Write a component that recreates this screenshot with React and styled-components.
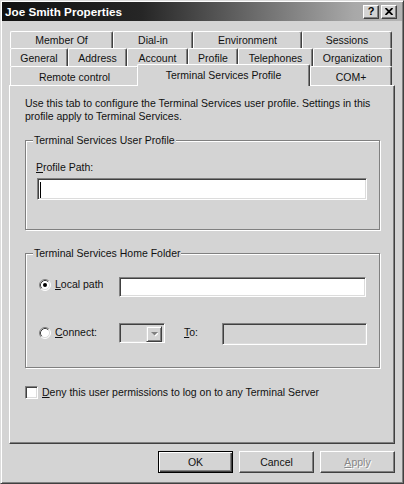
import React from "react";
import styled, { createGlobalStyle, css } from "styled-components";

const GlobalStyle = createGlobalStyle`
  html, body { margin: 0; padding: 0; background: #d4d4d4; }
  #root { width: 404px; height: 484px; }
`;

const FACE = "#d4d4d4";

const Window = styled.div`
  width: 404px;
  height: 484px;
  box-sizing: border-box;
  background: ${FACE};
  border: 1px solid;
  border-color: #dcdcdc #404040 #404040 #dcdcdc;
  box-shadow: inset 1px 1px 0 #fff, inset -1px -1px 0 #808080;
  padding: 1px;
  display: flex;
  flex-direction: column;
  font-family: "Liberation Sans", Arial, sans-serif;
  font-size: 10.5px;
  color: #111;
`;

const TitleBar = styled.div`
  height: 19px;
  flex: none;
  display: flex;
  align-items: center;
  padding: 0 5px 0 3px;
  background: linear-gradient(90deg, #111 0%, #262626 35%, #a8a8a8 88%, #b4b4b4 100%);
`;

const Title = styled.div`
  flex: 1;
  color: #fff;
  font-weight: bold;
  font-size: 11.7px;
  white-space: nowrap;
`;

const TitleButton = styled.div`
  width: 16px;
  height: 14px;
  box-sizing: border-box;
  margin-left: 2px;
  border: 1px solid;
  border-color: #fff #404040 #404040 #fff;
  box-shadow: inset -1px -1px 0 #808080;
  background: ${FACE};
  display: flex;
  align-items: center;
  justify-content: center;
  font-weight: bold;
  font-size: 11px;
  line-height: 1;
  color: #000;
`;

const TabStrip = styled.div`
  margin: 10px 0 0 8px;
  width: 382px;
  display: flex;
  flex-direction: column;
`;

const TabRow = styled.div`
  display: flex;
  height: ${(p) => p.$h}px;
`;

const Tab = styled.div`
  box-sizing: border-box;
  width: ${(p) => p.$w}px;
  flex: none;
  display: flex;
  align-items: center;
  justify-content: center;
  border-top: 1px solid #fff;
  border-left: 1px solid #fff;
  border-right: 1px solid #404040;
  box-shadow: inset -1px 0 0 #808080;
  border-top-left-radius: 2px;
  border-top-right-radius: 2px;
  background: ${FACE};
  white-space: nowrap;
  ${(p) =>
    p.$active &&
    css`
      align-self: flex-start;
      height: 22px;
      margin-top: -2px;
      margin-left: -2px;
      padding-bottom: 1px;
      position: relative;
      z-index: 1;
    `}
`;

const Panel = styled.div`
  margin: -1px 7px 0 7px;
  height: 359px;
  box-sizing: border-box;
  border: 1px solid;
  border-color: #fff #404040 #404040 #fff;
  box-shadow: inset -1px -1px 0 #808080;
  padding: 11px 0 0 15px;
  display: flex;
  flex-direction: column;
  align-items: flex-start;
`;

const Description = styled.p`
  margin: 0;
  max-width: 360px;
  line-height: 13px;
`;

const GroupBox = styled.fieldset`
  margin: ${(p) => p.$mt}px 0 0 0;
  padding: 0;
  width: 355px;
  min-width: 0;
  box-sizing: border-box;
  border: 1px solid #808080;
  box-shadow: inset 1px 1px 0 #fff, 1px 1px 0 #fff;
`;

const Legend = styled.legend`
  margin-left: 7px;
  padding: 0 1px;
  line-height: 13px;
  background: ${FACE};
`;

const GroupBody = styled.div`
  padding: ${(p) => p.$pad};
  display: flex;
  flex-direction: column;
`;

const FieldLabel = styled.label`
  display: block;
  line-height: 13px;
  margin-left: -1px;
`;

const TextBox = styled.div`
  box-sizing: border-box;
  width: ${(p) => p.$w}px;
  height: ${(p) => p.$h}px;
  margin-top: ${(p) => p.$mt || 0}px;
  flex: none;
  border: 1px solid;
  border-color: #808080 #fff #fff #808080;
  box-shadow: inset 1px 1px 0 #404040, inset -1px -1px 0 #dcdcdc;
  background: ${(p) => (p.$disabled ? FACE : "#fff")};
  display: flex;
  align-items: flex-start;
  padding: 3px 0 0 2px;
`;

const Caret = styled.span`
  display: block;
  width: 1px;
  height: 16px;
  background: #000;
`;

const OptionRow = styled.div`
  display: flex;
  align-items: flex-start;
  margin-top: ${(p) => p.$mt || 0}px;
`;

const RadioLabel = styled.label`
  display: flex;
  align-items: center;
  gap: 4px;
  width: 80px;
  flex: none;
  line-height: 13px;
  margin-top: ${(p) => p.$lt}px;
`;

const PlainLabel = styled.label`
  width: ${(p) => p.$w}px;
  flex: none;
  line-height: 13px;
  margin: ${(p) => p.$m};
`;

const Combo = styled.div`
  box-sizing: border-box;
  width: 46px;
  height: 20px;
  flex: none;
  border: 1px solid;
  border-color: #808080 #fff #fff #808080;
  box-shadow: inset 1px 1px 0 #404040, inset -1px -1px 0 #dcdcdc;
  background: ${FACE};
  display: flex;
  justify-content: flex-end;
  padding: 2px 2px 2px 0;
`;

const DropButton = styled.div`
  box-sizing: border-box;
  width: 16px;
  height: 16px;
  border: 1px solid;
  border-color: #dcdcdc #404040 #404040 #dcdcdc;
  box-shadow: inset 1px 1px 0 #fff, inset -1px -1px 0 #808080;
  background: ${FACE};
  display: flex;
  align-items: center;
  justify-content: center;
`;

const CheckRow = styled.div`
  display: flex;
  align-items: center;
  gap: 4px;
  margin-top: 18px;
  line-height: 13px;
`;

const CheckBox = styled.span`
  display: block;
  box-sizing: border-box;
  width: 13px;
  height: 13px;
  border: 1px solid;
  border-color: #808080 #fff #fff #808080;
  box-shadow: inset 1px 1px 0 #404040, inset -1px -1px 0 #dcdcdc;
  background: #fff;
`;

const ButtonRow = styled.div`
  display: flex;
  justify-content: flex-end;
  gap: 6px;
  margin-top: 7px;
  padding-right: 7px;
`;

const Button = styled.button`
  width: 75px;
  height: 22px;
  box-sizing: border-box;
  padding: 0;
  font: inherit;
  color: #111;
  background: ${FACE};
  border: 1px solid;
  border-color: #fff #404040 #404040 #fff;
  box-shadow: inset -1px -1px 0 #808080;
  ${(p) =>
    p.$default &&
    css`
      border-color: #000;
      box-shadow: inset 1px 1px 0 #fff, inset -1px -1px 0 #404040,
        inset -2px -2px 0 #808080;
    `}
  &:disabled {
    color: #888;
    text-shadow: 1px 1px 0 #fff;
  }
`;

const Radio = ({ checked }) => (
  <svg width="12" height="12" viewBox="0 0 12 12">
    <circle cx="6" cy="6" r="5" fill="#fff" />
    <path d="M9.89 2.11 A5.5 5.5 0 0 0 2.11 9.89" stroke="#808080" fill="none" />
    <path d="M9.18 2.82 A4.5 4.5 0 0 0 2.82 9.18" stroke="#404040" fill="none" />
    <path d="M9.89 2.11 A5.5 5.5 0 0 1 2.11 9.89" stroke="#fff" fill="none" />
    <path d="M9.18 2.82 A4.5 4.5 0 0 1 2.82 9.18" stroke="#dcdcdc" fill="none" />
    {checked && <circle cx="6" cy="6" r="2" fill="#000" />}
  </svg>
);

const rows = [
  { h: 17, tabs: [["Member Of", 103], ["Dial-in", 80], ["Environment", 109], ["Sessions", 90]] },
  {
    h: 18,
    tabs: [["General", 58], ["Address", 59], ["Account", 61], ["Profile", 50], ["Telephones", 75], ["Organization", 79]],
  },
  { h: 20, tabs: [["Remote control", 129], ["Terminal Services Profile", 173, true], ["COM+", 82]] },
];

export default function App() {
  return (
    <>
      <GlobalStyle />
      <Window>
        <TitleBar>
          <Title>Joe Smith Properties</Title>
          <TitleButton>?</TitleButton>
          <TitleButton>
            <svg width="8" height="7" viewBox="0 0 8 7">
              <path d="M0.5 0 L7.5 7 M7.5 0 L0.5 7" stroke="#000" strokeWidth="1.8" />
            </svg>
          </TitleButton>
        </TitleBar>

        <TabStrip>
          {rows.map((row, i) => (
            <TabRow key={i} $h={row.h}>
              {row.tabs.map(([label, w, active]) => (
                <Tab key={label} $w={w} $active={active}>
                  {label}
                </Tab>
              ))}
            </TabRow>
          ))}
        </TabStrip>

        <Panel>
          <Description>
            Use this tab to configure the Terminal Services user profile. Settings in this profile apply to
            Terminal Services.
          </Description>

          <GroupBox $mt={11}>
            <Legend>Terminal Services User Profile</Legend>
            <GroupBody $pad="14px 0 29px 11px">
              <FieldLabel>
                <u>P</u>rofile Path:
              </FieldLabel>
              <TextBox $w={330} $h={22} $mt={4}>
                <Caret />
              </TextBox>
            </GroupBody>
          </GroupBox>

          <GroupBox $mt={17}>
            <Legend>Terminal Services Home Folder</Legend>
            <GroupBody $pad="17px 0 22px 13px">
              <OptionRow>
                <RadioLabel $lt={1}>
                  <Radio checked />
                  <span>
                    <u>L</u>ocal path
                  </span>
                </RadioLabel>
                <TextBox $w={247} $h={20} />
              </OptionRow>
              <OptionRow $mt={26}>
                <RadioLabel $lt={3}>
                  <Radio />
                  <span>
                    <u>C</u>onnect:
                  </span>
                </RadioLabel>
                <Combo>
                  <DropButton>
                    <svg width="7" height="5" viewBox="0 0 7 5">
                      <path d="M1 1 H8 L4.5 4.5 Z" fill="#fff" />
                      <path d="M0 0 H7 L3.5 3.5 Z" fill="#808080" />
                    </svg>
                  </DropButton>
                </Combo>
                <PlainLabel $w={38} $m="3px 0 0 19px">
                  <u>T</u>o:
                </PlainLabel>
                <TextBox $w={145} $h={22} $disabled />
              </OptionRow>
            </GroupBody>
          </GroupBox>

          <CheckRow>
            <CheckBox />
            <span>
              <u>D</u>eny this user permissions to log on to any Terminal Server
            </span>
          </CheckRow>
        </Panel>

        <ButtonRow>
          <Button $default>OK</Button>
          <Button>Cancel</Button>
          <Button disabled>
            <u>A</u>pply
          </Button>
        </ButtonRow>
      </Window>
    </>
  );
}
